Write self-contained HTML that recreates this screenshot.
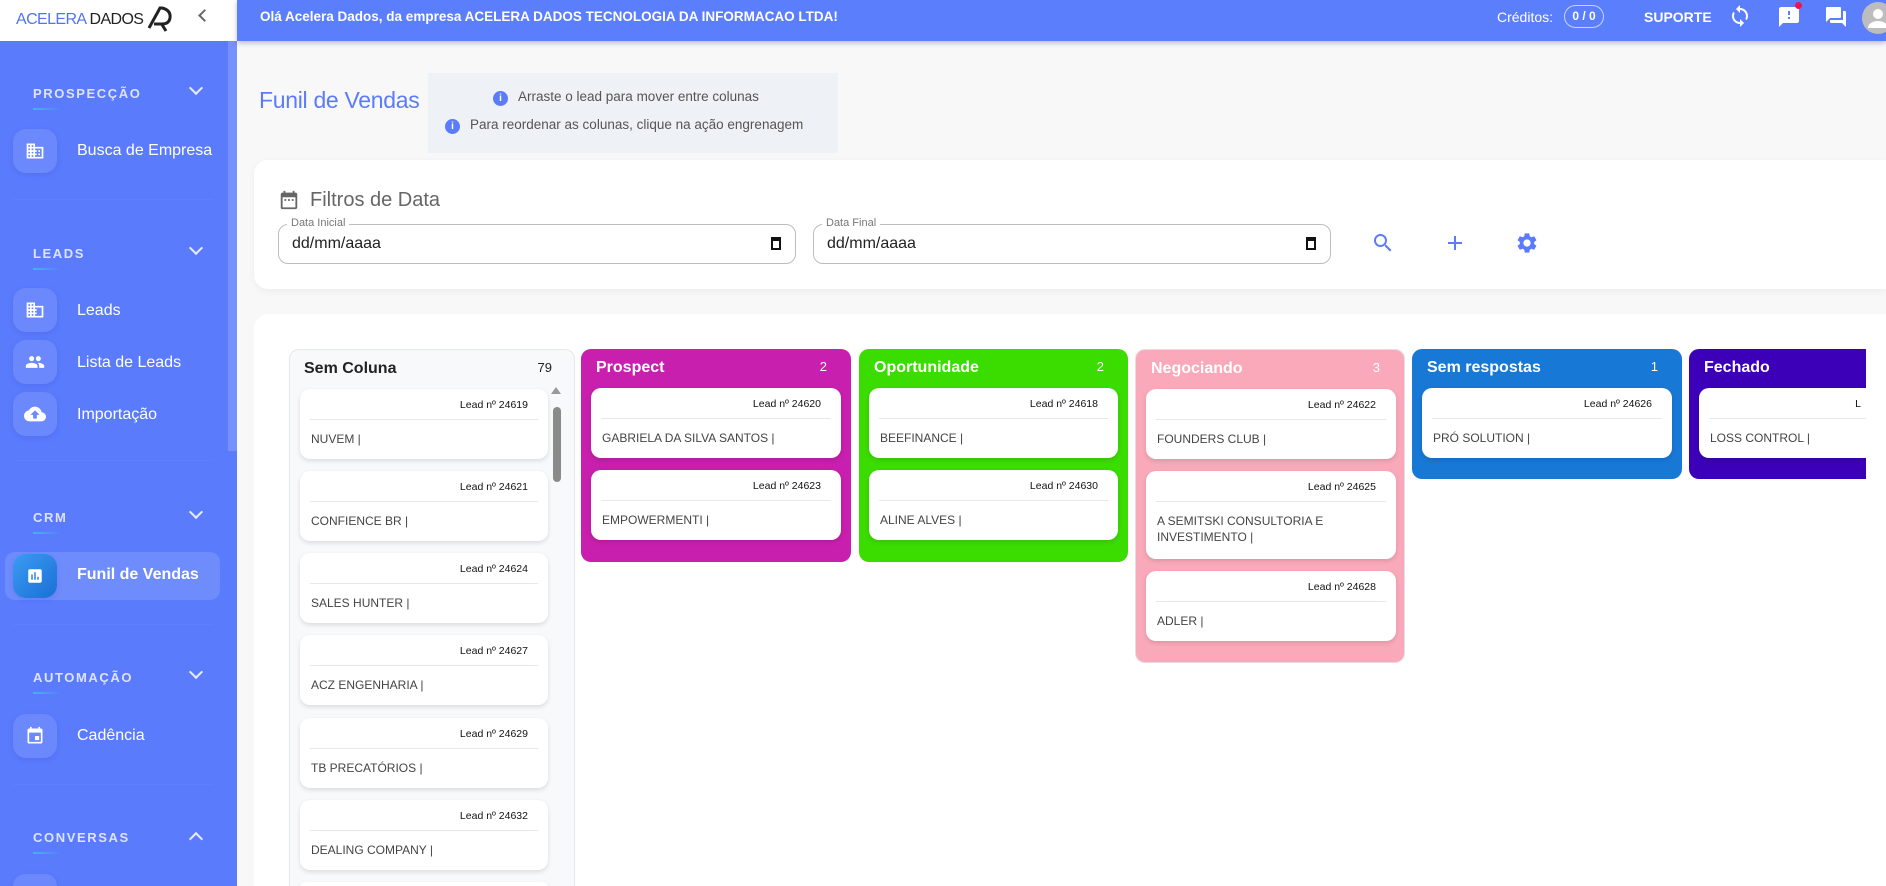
<!DOCTYPE html>
<html><head><meta charset="utf-8">
<style>
*{box-sizing:border-box;margin:0;padding:0}
html,body{width:1886px;height:886px;overflow:hidden}
body{background:#f8f8f9;font-family:"Liberation Sans",Arial,sans-serif;position:relative}
.abs{position:absolute}
#side{left:0;top:0;width:237px;height:886px;background:#5a7bfc;overflow:hidden}
#logo{left:0;top:0;width:237px;height:41px;background:#fff}
.lab{position:absolute;left:33px;font-size:13px;font-weight:bold;letter-spacing:1.6px;color:#dde3ff}
.lab:after{content:"";position:absolute;left:0;top:22px;width:28px;height:2px;background:linear-gradient(90deg,#45b3f0,rgba(69,179,240,0))}
.chev{position:absolute;left:191px;width:10px;height:10px;border-right:2px solid #e8ecff;border-bottom:2px solid #e8ecff;transform:rotate(45deg)}
.ib{position:absolute;left:13px;width:44px;height:44px;border-radius:13px;background:#6b88fc;box-shadow:0 2px 6px rgba(40,60,180,.15);display:flex;align-items:center;justify-content:center}
.it{position:absolute;left:77px;font-size:16px;color:#fff}
.div{position:absolute;left:13px;width:200px;height:1px;background:#5f80fb}
#hdr{left:237px;top:0;width:1649px;height:41px;background:#5b7efc;box-shadow:0 2px 5px rgba(0,0,0,.25)}
.col{position:absolute;top:349px;border-radius:10px}
.ch{position:absolute;left:15px;top:10px;font-size:16px;font-weight:bold;color:#fff}
.cn{position:absolute;right:24px;top:10px;font-size:13px;color:#fff}
.card{position:absolute;background:#fff;border-radius:10px;box-shadow:0 2px 5px rgba(0,0,0,.12);height:70px}
.card .ln{position:absolute;right:20px;top:10px;font-size:10.5px;color:#111}
.card .hr{position:absolute;left:10px;right:10px;top:30px;height:1px;background:#e6e8ee}
.card .nm{position:absolute;left:11px;top:42px;font-size:12px;color:#444;line-height:16px}
</style></head><body>
<div id="side" class="abs">
  <div class="abs" style="left:228px;top:41px;width:9px;height:410px;background:#7791fc"></div>
  <div class="lab" style="top:86px">PROSPECÇÃO</div><div class="chev" style="top:83px"></div>
  <div class="ib" style="top:129px"><svg width="20" height="20" viewBox="0 0 24 24"><path fill="#fff" d="M12 7V3H2v18h20V7H12zM6 19H4v-2h2v2zm0-4H4v-2h2v2zm0-4H4V9h2v2zm0-4H4V5h2v2zm4 12H8v-2h2v2zm0-4H8v-2h2v2zm0-4H8V9h2v2zm0-4H8V5h2v2zm10 12h-8v-2h2v-2h-2v-2h2v-2h-2V9h8v10zm-2-8h-2v2h2v-2zm0 4h-2v2h2v-2z"/></svg></div>
  <div class="it" style="top:142px">Busca de Empresa</div>
  <div class="div" style="top:199px"></div>
  <div class="lab" style="top:246px">LEADS</div><div class="chev" style="top:243px"></div>
  <div class="ib" style="top:288px"><svg width="20" height="20" viewBox="0 0 24 24"><path fill="#fff" d="M12 7V3H2v18h20V7H12zM6 19H4v-2h2v2zm0-4H4v-2h2v2zm0-4H4V9h2v2zm0-4H4V5h2v2zm4 12H8v-2h2v2zm0-4H8v-2h2v2zm0-4H8V9h2v2zm0-4H8V5h2v2zm10 12h-8v-2h2v-2h-2v-2h2v-2h-2V9h8v10z"/></svg></div>
  <div class="it" style="top:302px">Leads</div>
  <div class="ib" style="top:340px"><svg width="20" height="20" viewBox="0 0 24 24"><path fill="#fff" d="M16 11c1.66 0 2.99-1.34 2.99-3S17.66 5 16 5s-3 1.34-3 3 1.34 3 3 3zm-8 0c1.66 0 2.99-1.34 2.99-3S9.66 5 8 5 5 6.34 5 8s1.34 3 3 3zm0 2c-2.33 0-7 1.17-7 3.5V19h14v-2.5C15 14.17 10.33 13 8 13zm8 0c-.29 0-.62.02-.97.05 1.16.84 1.97 1.97 1.97 3.45V19h6v-2.5c0-2.33-4.67-3.5-7-3.5z"/></svg></div>
  <div class="it" style="top:354px">Lista de Leads</div>
  <div class="ib" style="top:392px"><svg width="22" height="22" viewBox="0 0 24 24"><path fill="#fff" d="M19.35 10.04A7.49 7.49 0 0 0 12 4C9.11 4 6.6 5.64 5.35 8.04A5.994 5.994 0 0 0 0 14c0 3.31 2.69 6 6 6h13c2.76 0 5-2.24 5-5 0-2.64-2.05-4.78-4.65-4.96zM14 13v4h-4v-4H7l5-5 5 5h-3z"/></svg></div>
  <div class="it" style="top:406px">Importação</div>
  <div class="div" style="top:460px"></div>
  <div class="lab" style="top:510px">CRM</div><div class="chev" style="top:507px"></div>
  <div class="abs" style="left:5px;top:552px;width:215px;height:48px;border-radius:10px;background:#6f8cfc"></div>
  <div class="ib" style="top:554px;background:linear-gradient(135deg,#3a9cf2,#1b6fd6)"><svg width="18" height="18" viewBox="0 0 24 24"><path fill="#fff" d="M19 3H5c-1.1 0-2 .9-2 2v14c0 1.1.9 2 2 2h14c1.1 0 2-.9 2-2V5c0-1.1-.9-2-2-2zM9 17H7v-7h2v7zm4 0h-2V7h2v10zm4 0h-2v-4h2v4z"/></svg></div>
  <div class="it" style="top:566px;font-weight:bold">Funil de Vendas</div>
  <div class="div" style="top:624px"></div>
  <div class="lab" style="top:670px">AUTOMAÇÃO</div><div class="chev" style="top:667px"></div>
  <div class="ib" style="top:714px"><svg width="20" height="20" viewBox="0 0 24 24"><path fill="#fff" d="M17 12h-5v5h5v-5zM16 1v2H8V1H6v2H5c-1.11 0-2 .9-2 2v14a2 2 0 0 0 2 2h14c1.1 0 2-.9 2-2V5c0-1.1-.9-2-2-2h-1V1h-2zm3 18H5V8h14v11z"/></svg></div>
  <div class="it" style="top:727px">Cadência</div>
  <div class="div" style="top:784px"></div>
  <div class="lab" style="top:830px">CONVERSAS</div><div class="chev" style="top:834px;transform:rotate(-135deg)"></div>
  <div class="ib" style="top:874px;height:12px;border-radius:13px 13px 0 0"></div>
</div>
<div id="logo" class="abs">
  <div class="abs" style="left:16px;top:11px;font-size:16px;letter-spacing:-.6px;white-space:nowrap"><span style="color:#4f74f5">ACELERA</span> <span style="color:#222">DADOS</span></div>
  <svg class="abs" style="left:146px;top:4px" width="28" height="28" viewBox="0 0 28 28"><path d="M3 24 L14 4 L16 4 Q25 6 24 14 Q23 20 16 20 L8 20 M15 19 L20 27" stroke="#222" stroke-width="3" fill="none"/></svg>
  <div class="abs" style="left:200px;top:11px;width:9px;height:9px;border-left:2px solid #666;border-bottom:2px solid #666;transform:rotate(45deg)"></div>
</div>
<div id="hdr" class="abs">
  <div class="abs" style="left:23px;top:9px;font-size:13.5px;font-weight:bold;color:#fff">Olá Acelera Dados, da empresa ACELERA DADOS TECNOLOGIA DA INFORMACAO LTDA!</div>
  <div class="abs" style="left:1260px;top:9px;font-size:14px;color:#fff">Créditos:</div>
  <div class="abs" style="left:1327px;top:5px;width:40px;height:23px;border:1px solid #c9d3ff;border-radius:12px;color:#fff;font-size:12px;font-weight:bold;text-align:center;line-height:21px">0 / 0</div>
  <div class="abs" style="left:1407px;top:9px;font-size:14px;font-weight:bold;color:#fff">SUPORTE</div>
  <svg class="abs" style="left:1491px;top:4px" width="24" height="24" viewBox="0 0 24 24"><path fill="#fff" d="M12 4V1L8 5l4 4V6c3.31 0 6 2.69 6 6 0 1.01-.25 1.97-.7 2.8l1.46 1.46A7.93 7.93 0 0 0 20 12c0-4.42-3.58-8-8-8zm0 14c-3.31 0-6-2.69-6-6 0-1.01.25-1.970.7-2.8L5.24 7.74A7.93 7.93 0 0 0 4 12c0 4.42 3.58 8 8 8v3l4-4-4-4v3z"/></svg>
  <svg class="abs" style="left:1540px;top:5px" width="24" height="24" viewBox="0 0 24 24"><path fill="#fff" d="M20 2H4c-1.1 0-2 .9-2 2v18l4-4h14c1.1 0 2-.9 2-2V4c0-1.1-.9-2-2-2zm-7 12h-2v-2h2v2zm0-4h-2V6h2v4z"/></svg>
  <div class="abs" style="left:1558px;top:2px;width:7px;height:7px;border-radius:50%;background:#f0134d"></div>
  <svg class="abs" style="left:1587px;top:5px" width="24" height="24" viewBox="0 0 24 24"><path fill="#fff" d="M21 6h-2v9H6v2c0 .55.45 1 1 1h11l4 4V7c0-.55-.45-1-1-1zm-4 6V3c0-.55-.45-1-1-1H3c-.55 0-1 .45-1 1v14l4-4h10c.55 0 1-.45 1-1z"/></svg>
  <div class="abs" style="left:1625px;top:2px;width:32px;height:32px;border-radius:50%;background:#bdbdbd;overflow:hidden"><svg width="32" height="32" viewBox="0 0 32 32"><circle cx="16" cy="12" r="5" fill="#fff"/><path d="M6 26c0-5 6-7 10-7s10 2 10 7z" fill="#fff"/></svg></div>
</div>
<div class="abs" style="left:259px;top:87px;font-size:23px;color:#5b7cfa;letter-spacing:-.3px">Funil de Vendas</div>
<div class="abs" style="left:428px;top:73px;width:410px;height:80px;background:#eef1f5">
  <div class="abs" style="left:65px;top:16px;font-size:13.5px;color:#555"><span style="display:inline-block;width:15px;height:15px;border-radius:50%;background:#5b7cfa;color:#fff;font-size:10px;text-align:center;line-height:15px;font-weight:bold;margin-right:10px">i</span>Arraste o lead para mover entre colunas</div>
  <div class="abs" style="left:17px;top:44px;font-size:13.5px;color:#555"><span style="display:inline-block;width:15px;height:15px;border-radius:50%;background:#5b7cfa;color:#fff;font-size:10px;text-align:center;line-height:15px;font-weight:bold;margin-right:10px">i</span>Para reordenar as colunas, clique na ação engrenagem</div>
</div>
<div class="abs" style="left:254px;top:160px;width:1632px;height:129px;background:#fff;border-radius:14px 0 0 14px;box-shadow:0 2px 8px rgba(0,0,0,.05)">
  <svg class="abs" style="left:24px;top:28px" width="22" height="24" viewBox="0 0 24 24"><path fill="#666" d="M9 11H7v2h2v-2zm4 0h-2v2h2v-2zm4 0h-2v2h2v-2zm2-7h-1V2h-2v2H8V2H6v2H5c-1.11 0-2 .9-2 2v14a2 2 0 0 0 2 2h14c1.1 0 2-.9 2-2V6c0-1.1-.9-2-2-2zm0 16H5V9h14v11z"/></svg>
  <div class="abs" style="left:56px;top:29px;font-size:20px;color:#666">Filtros de Data</div>
  <div class="abs" style="left:24px;top:64px;width:518px;height:40px;border:1px solid #bdbdbd;border-radius:10px"><div class="abs" style="left:8px;top:-8px;background:#fff;padding:0 4px;font-size:11px;color:#777">Data Inicial</div><div class="abs" style="left:13px;top:10px;font-size:16px;color:#222">dd/mm/aaaa</div><div class="abs" style="right:14px;top:12px;width:10px;height:13px;border:2px solid #111;border-top-width:4px"></div></div>
  <div class="abs" style="left:559px;top:64px;width:518px;height:40px;border:1px solid #bdbdbd;border-radius:10px"><div class="abs" style="left:8px;top:-8px;background:#fff;padding:0 4px;font-size:11px;color:#777">Data Final</div><div class="abs" style="left:13px;top:10px;font-size:16px;color:#222">dd/mm/aaaa</div><div class="abs" style="right:14px;top:12px;width:10px;height:13px;border:2px solid #111;border-top-width:4px"></div></div>
  <svg class="abs" style="left:1117px;top:71px" width="24" height="24" viewBox="0 0 24 24"><path fill="#5b7cfa" d="M15.5 14h-.79l-.28-.27A6.47 6.47 0 0 0 16 9.5 6.5 6.5 0 1 0 9.5 16c1.61 0 3.09-.59 4.23-1.57l.27.28v.79l5 4.99L20.49 19l-4.99-5zm-6 0C7.01 14 5 11.99 5 9.5S7.01 5 9.5 5 14 7.01 14 9.5 11.99 14 9.5 14z"/></svg>
  <svg class="abs" style="left:1189px;top:71px" width="24" height="24" viewBox="0 0 24 24"><path fill="#5b7cfa" d="M19 13h-6v6h-2v-6H5v-2h6V5h2v6h6v2z"/></svg>
  <svg class="abs" style="left:1261px;top:71px" width="24" height="24" viewBox="0 0 24 24"><path fill="#5b7cfa" d="M19.14 12.94c.04-.3.06-.61.06-.94 0-.32-.02-.64-.07-.94l2.03-1.58a.49.49 0 0 0 .12-.61l-1.92-3.32a.488.488 0 0 0-.59-.22l-2.39.96c-.5-.38-1.03-.7-1.62-.94l-.36-2.54a.484.484 0 0 0-.48-.41h-3.84c-.24 0-.43.17-.47.41l-.36 2.54c-.59.24-1.13.57-1.62.94l-2.39-.96c-.22-.08-.47 0-.59.22L2.74 8.87c-.12.21-.08.47.12.61l2.03 1.58c-.05.3-.09.63-.09.94s.02.64.07.94l-2.03 1.58a.49.49 0 0 0-.12.61l1.92 3.32c.12.22.37.29.59.22l2.39-.96c.5.38 1.03.7 1.62.94l.36 2.54c.05.24.24.41.48.41h3.84c.24 0 .44-.17.47-.41l.36-2.54c.59-.24 1.13-.56 1.62-.94l2.39.96c.22.08.47 0 .59-.22l1.92-3.32c.12-.22.07-.47-.12-.61l-2.01-1.58zM12 15.6c-1.98 0-3.6-1.62-3.6-3.6s1.62-3.6 3.6-3.6 3.6 1.62 3.6 3.6-1.62 3.6-3.6 3.6z"/></svg>
</div>
<div class="abs" style="left:254px;top:314px;width:1632px;height:572px;background:#fff;border-radius:14px 0 0 0;overflow:hidden"></div>
<div class="col" style="left:289px;width:286px;height:537px;background:#f8f9fb;border:1px solid #e4e7ec;border-bottom:none;border-radius:10px 10px 0 0;overflow:hidden">
  <div class="ch" style="color:#222;left:14px">Sem Coluna</div><div class="cn" style="color:#222;right:22px">79</div>
  <div class="abs" style="left:261px;top:37px;width:0;height:0;border-left:5px solid transparent;border-right:5px solid transparent;border-bottom:7px solid #999"></div>
  <div class="abs" style="left:263px;top:57px;width:8px;height:75px;border-radius:4px;background:#8a8a8a"></div>
  <div class="card" style="left:10px;top:39px;width:248px"><div class="ln">Lead nº 24619</div><div class="hr"></div><div class="nm">NUVEM |</div></div>
  <div class="card" style="left:10px;top:121px;width:248px"><div class="ln">Lead nº 24621</div><div class="hr"></div><div class="nm">CONFIENCE BR |</div></div>
  <div class="card" style="left:10px;top:203px;width:248px"><div class="ln">Lead nº 24624</div><div class="hr"></div><div class="nm">SALES HUNTER |</div></div>
  <div class="card" style="left:10px;top:285px;width:248px"><div class="ln">Lead nº 24627</div><div class="hr"></div><div class="nm">ACZ ENGENHARIA |</div></div>
  <div class="card" style="left:10px;top:368px;width:248px"><div class="ln">Lead nº 24629</div><div class="hr"></div><div class="nm">TB PRECATÓRIOS |</div></div>
  <div class="card" style="left:10px;top:450px;width:248px"><div class="ln">Lead nº 24632</div><div class="hr"></div><div class="nm">DEALING COMPANY |</div></div>
  <div class="card" style="left:10px;top:532px;width:248px;height:5px;border-radius:10px 10px 0 0"></div>
</div>
<div class="col" style="left:581px;width:270px;height:213px;background:#c81fae">
  <div class="ch">Prospect</div><div class="cn">2</div>
  <div class="card" style="left:10px;top:39px;width:250px"><div class="ln">Lead nº 24620</div><div class="hr"></div><div class="nm">GABRIELA DA SILVA SANTOS |</div></div>
  <div class="card" style="left:10px;top:121px;width:250px"><div class="ln">Lead nº 24623</div><div class="hr"></div><div class="nm">EMPOWERMENTI |</div></div>
</div>
<div class="col" style="left:859px;width:269px;height:213px;background:#3bdc00">
  <div class="ch">Oportunidade</div><div class="cn">2</div>
  <div class="card" style="left:10px;top:39px;width:249px"><div class="ln">Lead nº 24618</div><div class="hr"></div><div class="nm">BEEFINANCE |</div></div>
  <div class="card" style="left:10px;top:121px;width:249px"><div class="ln">Lead nº 24630</div><div class="hr"></div><div class="nm">ALINE ALVES |</div></div>
</div>
<div class="col" style="left:1135px;width:270px;height:314px;background:#f9a9b9;border:1px solid #e6dde0">
  <div class="ch">Negociando</div><div class="cn">3</div>
  <div class="card" style="left:10px;top:39px;width:250px"><div class="ln">Lead nº 24622</div><div class="hr"></div><div class="nm">FOUNDERS CLUB |</div></div>
  <div class="card" style="left:10px;top:121px;width:250px;height:88px"><div class="ln">Lead nº 24625</div><div class="hr"></div><div class="nm">A SEMITSKI CONSULTORIA E<br>INVESTIMENTO |</div></div>
  <div class="card" style="left:10px;top:221px;width:250px"><div class="ln">Lead nº 24628</div><div class="hr"></div><div class="nm">ADLER |</div></div>
</div>
<div class="col" style="left:1412px;width:270px;height:130px;background:#1778d6">
  <div class="ch">Sem respostas</div><div class="cn">1</div>
  <div class="card" style="left:10px;top:39px;width:250px"><div class="ln">Lead nº 24626</div><div class="hr"></div><div class="nm">PRÓ SOLUTION |</div></div>
</div>
<div class="col" style="left:1689px;width:177px;height:130px;background:#3c00b8;border-radius:10px 0 0 10px;overflow:hidden">
  <div class="ch">Fechado</div>
  <div class="card" style="left:10px;top:39px;width:250px"><div class="ln" style="right:88px">L</div><div class="hr"></div><div class="nm">LOSS CONTROL |</div></div>
</div>
</body></html>
